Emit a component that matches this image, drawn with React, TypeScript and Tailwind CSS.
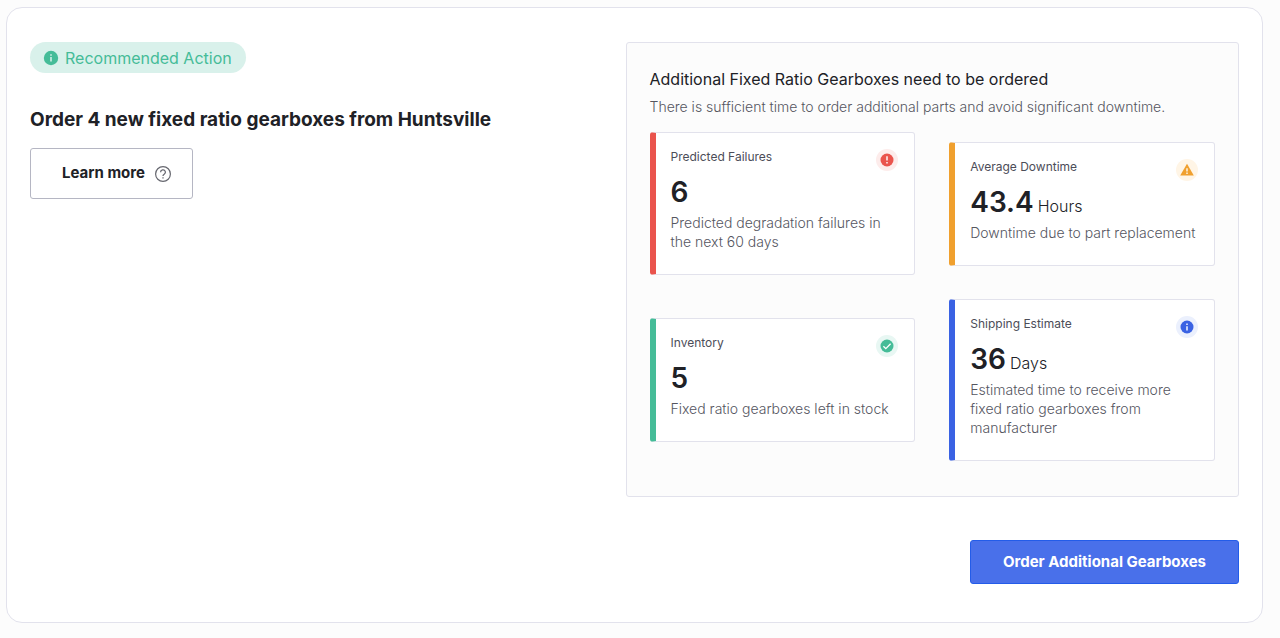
import React from "react";

type Tone = "red" | "orange" | "green" | "blue";

const tones: Record<Tone, { bar: string; halo: string; icon: string }> = {
  red: { bar: "border-l-[#ea544d]", halo: "bg-[#fdeceb]", icon: "text-[#ea544d]" },
  orange: { bar: "border-l-[#f0a02e]", halo: "bg-[#fff5e6]", icon: "text-[#f0a02e]" },
  green: { bar: "border-l-[#45bc98]", halo: "bg-[#e8f7f3]", icon: "text-[#45bc98]" },
  blue: { bar: "border-l-[#3a62e3]", halo: "bg-[#ebf0fd]", icon: "text-[#3a62e3]" },
};

function ToneIcon({ tone }: { tone: Tone }) {
  return (
    <svg viewBox="0 0 16 16" className={`h-4 w-4 ${tones[tone].icon}`} aria-hidden="true">
      {tone === "orange" ? (
        <path d="M8 1.8 14.8 13.6H1.2z" fill="currentColor" />
      ) : (
        <circle cx="8" cy="8" r="6.5" fill="currentColor" />
      )}
      {tone === "red" && <path d="M8 4.3v4.2M8 10v1.4" stroke="white" strokeWidth="1.4" />}
      {tone === "orange" && <path d="M8 6.3v3.2M8 10.6v1.3" stroke="white" strokeWidth="1.3" />}
      {tone === "blue" && <path d="M8 4.6V6M8 7.2v4.2" stroke="white" strokeWidth="1.4" />}
      {tone === "green" && <path d="m4.4 8.2 2.4 2.4 4.8-4.8" fill="none" stroke="white" strokeWidth="1.3" />}
    </svg>
  );
}

interface StatProps {
  tone: Tone;
  label: string;
  value: string;
  unit?: string;
  text: string;
}

function Stat({ tone, label, value, unit, text }: StatProps) {
  return (
    <article className={`relative rounded-[3px] border border-l-[6px] border-[#e2e2ec] bg-white pt-4 pr-4 pb-[23px] pl-[15px] ${tones[tone].bar}`}>
      <h3 className="text-[12px] leading-4 text-[#4c4d58]">{label}</h3>
      <p className="mt-[9px] flex h-9 items-baseline gap-1 text-[#202126]">
        <strong className="text-[28px] leading-9 font-semibold">{value}</strong>
        {unit && <span className="text-[16px] leading-6 font-light">{unit}</span>}
      </p>
      <p className="mt-[3px] text-[14px] leading-[19px] font-light text-[#55565f]">{text}</p>
      <span className={`absolute top-4 right-4 flex h-[22px] w-[22px] items-center justify-center rounded-full ${tones[tone].halo}`}>
        <ToneIcon tone={tone} />
      </span>
    </article>
  );
}

export default function App() {
  return (
    <div className="min-h-screen bg-[#fcfcfc] pt-[7px] pr-[17px] pb-[14px] pl-[6px] font-['Inter',sans-serif]">
      <main className="rounded-[16px] border border-[#e2e2ec] bg-white px-[23px] pt-[34px] pb-[38px]">
        <div className="flex items-start justify-between gap-6">
          <section className="flex flex-col items-start">
            <p className="flex h-[31px] items-center gap-[6px] rounded-full bg-[#d9f1eb] pr-[14px] pl-[13px] text-[16px] text-[#45bc98]">
              <svg viewBox="0 0 16 16" className="h-4 w-4" aria-hidden="true">
                <circle cx="8" cy="8" r="7.2" fill="currentColor" />
                <path d="M8 4.2v1.5M8 7v4.6" stroke="#d9f1eb" strokeWidth="1.5" />
              </svg>
              Recommended Action
            </p>
            <h1 className="mt-[33px] text-[19px] leading-7 font-bold text-[#202126]">Order 4 new fixed ratio gearboxes from Huntsville</h1>
            <button type="button" className="mt-[14px] flex h-[51px] items-center gap-[9px] rounded-[3px] border border-[#b5b6c3] bg-white pr-5 pl-[31px] text-[15px] font-bold text-[#202126]">
              Learn more
              <svg viewBox="0 0 18 18" className="h-[18px] w-[18px] text-[#66676f]" fill="none" stroke="currentColor" aria-hidden="true">
                <circle cx="9" cy="9" r="7.4" strokeWidth="1.2" />
                <path d="M6.6 7.3a2.4 2.4 0 1 1 3.6 2c-.8.5-1.2.9-1.2 1.7M9 12.2v1.4" strokeWidth="1.3" />
              </svg>
            </button>
          </section>
          <section className="w-[calc(50%+9px)] rounded-[3px] border border-[#e2e2ec] bg-[#fcfcfc] px-[23px] pt-6 pb-[35px]">
            <h2 className="text-[16px] leading-6 text-[#202126]">Additional Fixed Ratio Gearboxes need to be ordered</h2>
            <p className="mt-1 text-[14px] leading-6 font-light text-[#55565f]">There is sufficient time to order additional parts and avoid significant downtime.</p>
            <div className="mt-[13px] grid grid-cols-2 items-center gap-x-[34px] gap-y-6">
              <Stat tone="red" label="Predicted Failures" value="6" text="Predicted degradation failures in the next 60 days" />
              <Stat tone="orange" label="Average Downtime" value="43.4" unit="Hours" text="Downtime due to part replacement" />
              <Stat tone="green" label="Inventory" value="5" text="Fixed ratio gearboxes left in stock" />
              <Stat tone="blue" label="Shipping Estimate" value="36" unit="Days" text="Estimated time to receive more fixed ratio gearboxes from manufacturer" />
            </div>
          </section>
        </div>
        <div className="mt-[43px] flex justify-end">
          <button type="button" className="h-[44px] rounded-[3px] border border-[#235ce9] bg-[#4970ea] px-8 text-[15px] font-bold text-white">Order Additional Gearboxes</button>
        </div>
      </main>
    </div>
  );
}
